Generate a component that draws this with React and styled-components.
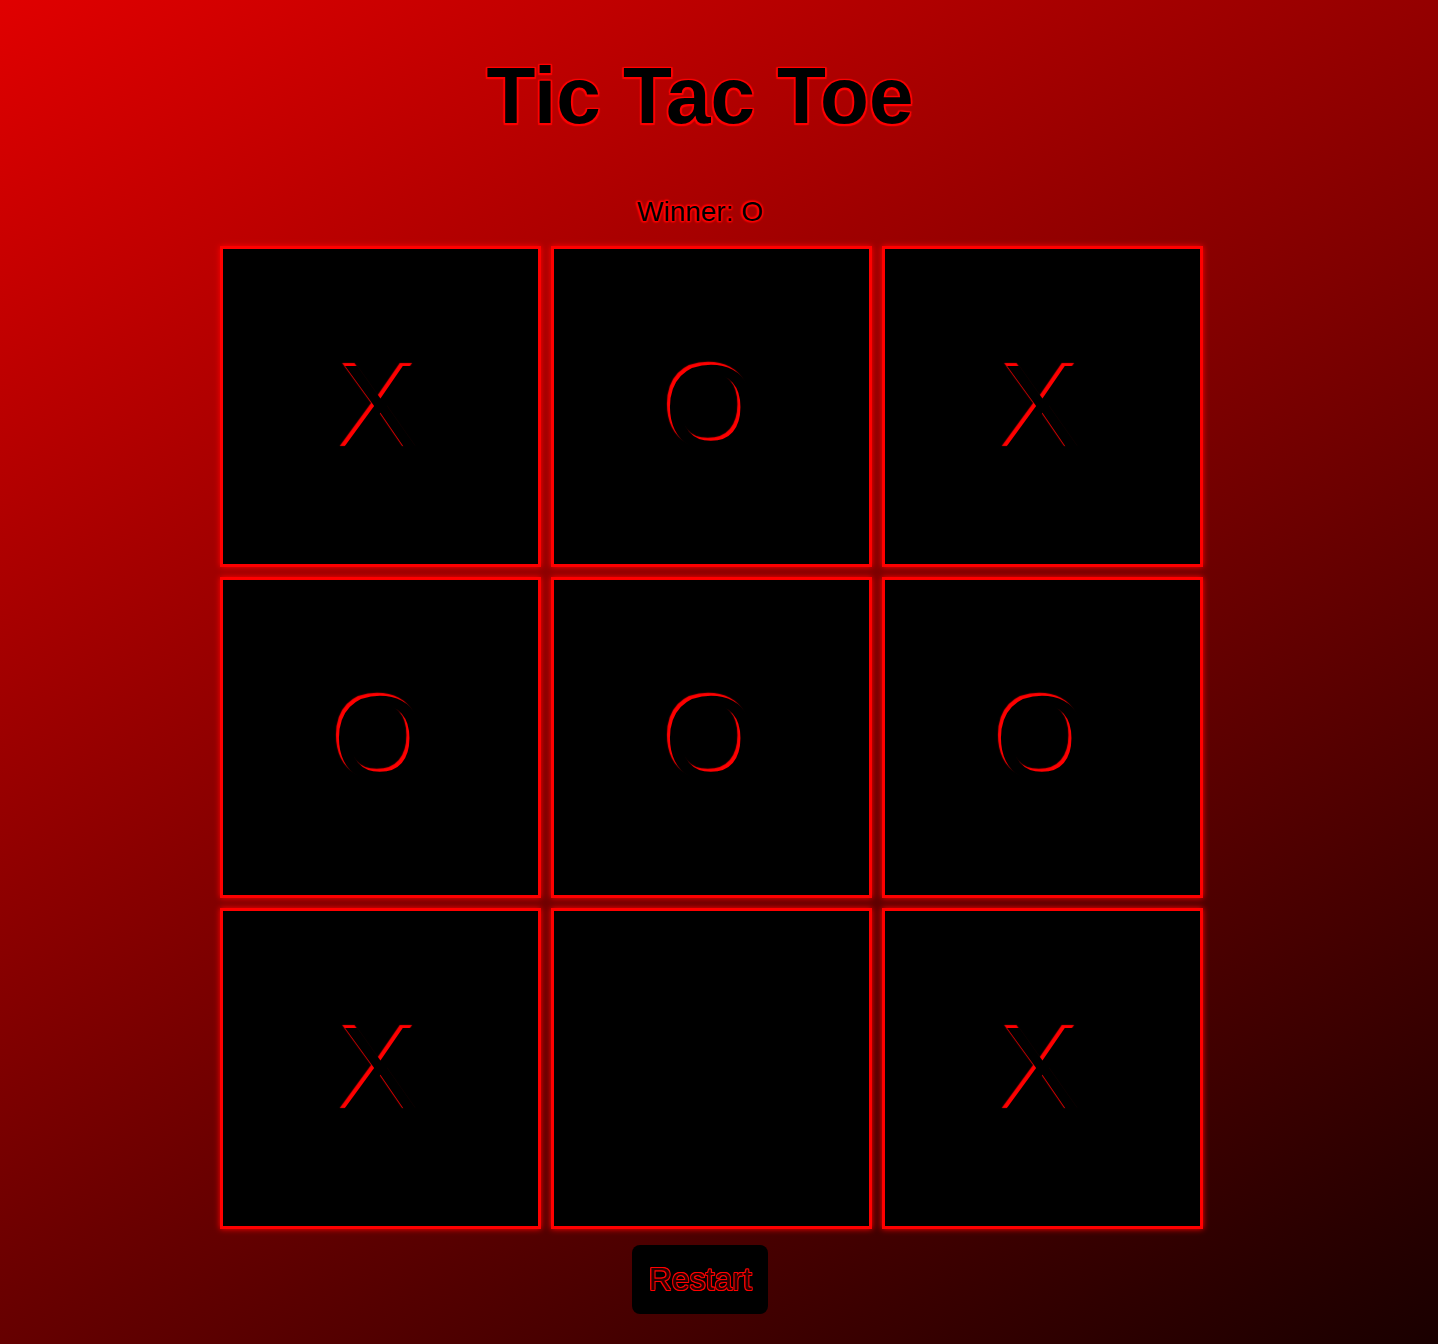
import React, { useState } from 'react';
import styled, { createGlobalStyle } from 'styled-components';

const GlobalStyle = createGlobalStyle`
  html, body {
    margin: 0;
    padding: 0;
  }
  body {
    min-height: 100vh;
    background: linear-gradient(150deg, #e00000, #1a0000);
    font-family: "Liberation Sans", Arial, sans-serif;
  }
`;

// red halo around dark text, same trick for title, status and button
const outline = (size, blur) => `
  ${size}px 0 ${blur}px #ff0000, -${size}px 0 ${blur}px #ff0000,
  0 ${size}px ${blur}px #ff0000, 0 -${size}px ${blur}px #ff0000,
  ${size}px ${size}px ${blur}px #ff0000, -${size}px -${size}px ${blur}px #ff0000,
  ${size}px -${size}px ${blur}px #ff0000, -${size}px ${size}px ${blur}px #ff0000
`;

const Page = styled.div`
  width: 1400px;
  padding-top: 50px;
  display: flex;
  flex-direction: column;
  align-items: center;
`;

const Title = styled.h1`
  margin: 0 0 54px;
  font-size: 80px;
  font-weight: 700;
  color: #000;
  text-shadow: ${outline(1.5, 1)};
`;

const Status = styled.div`
  margin-bottom: 18px;
  font-size: 28px;
  color: #000;
  text-shadow: ${outline(1, 2)};
`;

const Board = styled.div`
  margin: 0 0 16px 22px;
  display: grid;
  grid-template-columns: repeat(3, 321px);
  grid-auto-rows: 321px;
  gap: 10px;
`;

const Cell = styled.button`
  box-sizing: border-box;
  padding: 0;
  display: flex;
  align-items: center;
  justify-content: center;
  background: #000;
  border: 3px solid #ff0000;
  box-shadow: 0 0 6px #ff0000;
  font-family: "Liberation Sans", Arial, sans-serif;
  font-size: 120px;
  color: #000;
  text-shadow: -3px -3px 1px #ff0000;
  cursor: pointer;
`;

const RestartButton = styled.button`
  padding: 16px;
  background: #000;
  border: none;
  border-radius: 8px;
  font-family: "Liberation Sans", Arial, sans-serif;
  font-size: 32px;
  color: #2a0000;
  text-shadow: ${outline(0.8, 0.5)};
  cursor: pointer;
`;

const initialBoard = ['X', 'O', 'X', 'O', 'O', 'O', 'X', null, 'X'];

const App = () => {
  const [squares, setSquares] = useState(initialBoard);

  return (
    <>
      <GlobalStyle />
      <Page>
        <Title>Tic Tac Toe</Title>
        <Status>Winner: O</Status>
        <Board>
          {squares.map((value, i) => (
            <Cell key={i}>{value}</Cell>
          ))}
        </Board>
        <RestartButton onClick={() => setSquares(Array(9).fill(null))}>Restart</RestartButton>
      </Page>
    </>
  );
};

export default App;
